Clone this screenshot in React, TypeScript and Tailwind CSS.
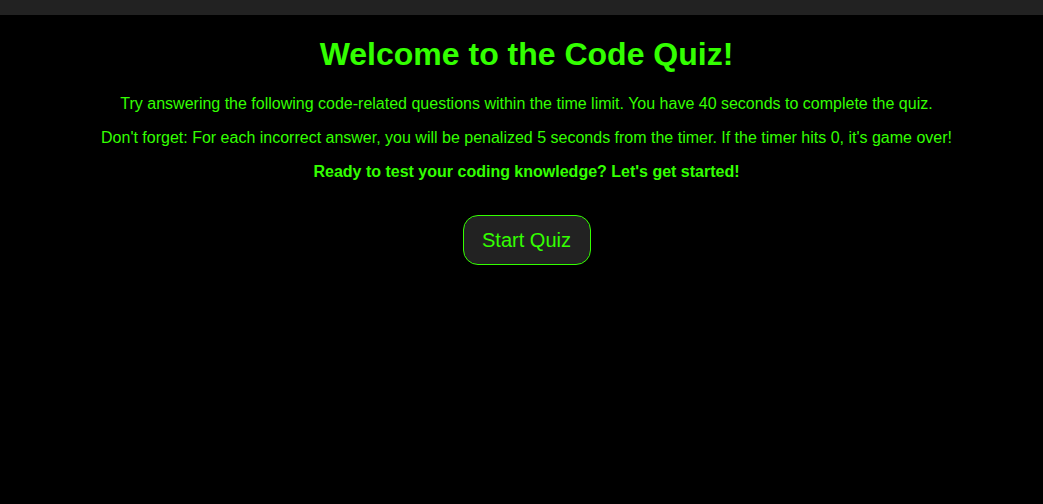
import React from 'react';

export default function App() {
  return (
    <div className="min-h-[504px] bg-black font-['Liberation_Sans',Arial,sans-serif] text-[#33ff00]">
      <div className="h-[15px] bg-[#222222]" />
      <main className="flex flex-col items-center pl-[10px] text-center">
        <h1 className="mt-[21px] text-[32px] font-bold leading-[37px]">Welcome to the Code Quiz!</h1>
        <p className="mt-[22px] text-base leading-[18px]">
          Try answering the following code-related questions within the time limit. You have 40 seconds to complete the quiz.
        </p>
        <p className="mt-4 text-base leading-[18px]">
          Don't forget: For each incorrect answer, you will be penalized 5 seconds from the timer. If the timer hits 0, it's game over!
        </p>
        <p className="mt-4 text-base font-bold leading-[18px]">
          Ready to test your coding knowledge? Let's get started!
        </p>
        <button className="mt-[34px] h-[50px] w-[128px] rounded-[15px] border border-[#33ff00] bg-[#222222] text-[20px] text-[#33ff00]">
          Start Quiz
        </button>
      </main>
    </div>
  );
}
